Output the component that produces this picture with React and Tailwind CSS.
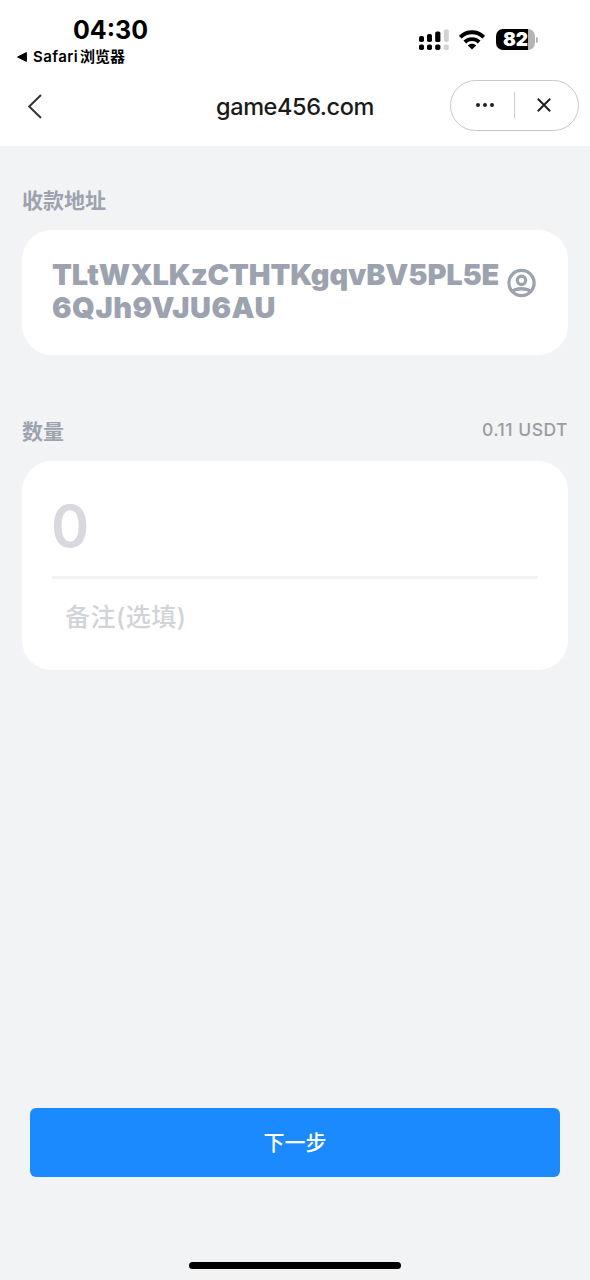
import React, { useState } from 'react';

function SignalIcon() {
  return (
    <svg width="30" height="21" viewBox="0 0 30 21">
      <g fill="#000">
        <rect x="0" y="7" width="5" height="6" rx="1.8" />
        <rect x="8" y="5" width="5" height="8" rx="1.8" />
        <rect x="16.2" y="2.5" width="5.2" height="10.5" rx="1.6" />
        <rect x="0" y="15.5" width="5" height="5.5" rx="1.8" />
        <rect x="8" y="15.5" width="5" height="5.5" rx="1.8" />
        <rect x="16.2" y="15.5" width="5.2" height="5.5" rx="1.8" />
      </g>
      <g fill="#d2d2d2">
        <rect x="24.8" y="0.3" width="5" height="12.7" rx="1.8" />
        <rect x="24.8" y="15.5" width="5" height="5.5" rx="1.8" />
      </g>
    </svg>
  );
}

function WifiIcon() {
  return (
    <svg width="26" height="20" viewBox="0 0 26 20">
      <g fill="none" stroke="#000" strokeWidth="3.9">
        <path d="M1.2 7.2 C8 0.6 18 0.6 24.8 7.2" />
        <path d="M5.8 12 C10 8.2 16 8.2 20.2 12" />
      </g>
      <path d="M13 19.4 L8.8 15.4 C11.3 13.2 14.7 13.2 17.2 15.4 Z" fill="#000" />
    </svg>
  );
}

function BatteryIcon({ level }) {
  return (
    <div className="flex items-center gap-[1px]">
      <div className="flex h-[21px] w-[39px] items-center justify-center rounded-[7px] bg-[linear-gradient(90deg,#000_82%,#b4b4b4_82%)]">
        <span className="text-[19px] leading-none font-black text-white">{level}</span>
      </div>
      <div className="h-[6px] w-[2px] rounded-r-full bg-[#b4b4b4]" />
    </div>
  );
}

function StatusBar() {
  return (
    <div className="flex h-[70px] justify-between">
      <div className="pt-[15px] pl-[17px] text-black">
        <div className="pl-[56px] text-[25px] leading-[30px] font-bold">04:30</div>
        <div className="mt-px flex h-[22px] items-center text-[15px] leading-[22px] font-semibold">
          <svg width="10" height="10" viewBox="0 0 10 10" className="mr-[6px]">
            <path d="M0.6 5 L9.4 0.6 V9.4 Z" fill="#000" stroke="#000" strokeLinejoin="round" />
          </svg>
          <span className="mr-[2px] tracking-[0.4px]">Safari</span>
          <span className="font-bold">浏览器</span>
        </div>
      </div>
      <div className="mt-[29px] mr-[52px] flex h-[21px] items-center">
        <SignalIcon />
        <div className="mr-[11px] ml-[10px]">
          <WifiIcon />
        </div>
        <BatteryIcon level={82} />
      </div>
    </div>
  );
}

function NavBar() {
  return (
    <div className="grid h-[76px] grid-cols-[1fr_auto_1fr] items-start pt-[10px]">
      <button className="mt-[13px] ml-[27px] w-[16px]">
        <svg width="16" height="27" viewBox="0 0 16 27">
          <path d="M14 2 L2.2 13.5 L14 25" fill="none" stroke="#333" strokeWidth="2" />
        </svg>
      </button>
      <h1 className="pt-[10px] text-[23.5px] leading-[34px] font-medium tracking-[-0.4px] text-[#1a1a1a]">game456.com</h1>
      <div className="mr-[11px] flex h-[51px] w-[129px] items-center justify-self-end rounded-full border border-[#c8c8c8] pb-[2px]">
        <button className="flex flex-1 justify-center pl-[5px]">
          <svg width="18" height="4" viewBox="0 0 18 4" fill="#222">
            <circle cx="2" cy="2" r="2" />
            <circle cx="9" cy="2" r="2" />
            <circle cx="16" cy="2" r="2" />
          </svg>
        </button>
        <div className="h-[26px] w-px bg-[#ccc]" />
        <button className="flex flex-1 justify-center pr-[5px]">
          <svg width="14" height="14" viewBox="0 0 14 14">
            <path d="M0.8 0.8 L13.2 13.2 M13.2 0.8 L0.8 13.2" stroke="#222" strokeWidth="2" />
          </svg>
        </button>
      </div>
    </div>
  );
}

function ContactIcon() {
  return (
    <svg width="30" height="30" viewBox="0 0 30 30" fill="none" stroke="#9ca3af" strokeWidth="3.3">
      <circle cx="14.5" cy="15" r="12.6" />
      <circle cx="14.5" cy="12.3" r="4.2" />
      <path d="M6 23 C9.5 20 19.5 20 23 23" />
    </svg>
  );
}

export default function App() {
  const [amount, setAmount] = useState('');
  const [note, setNote] = useState('');

  return (
    <div className="flex h-[1280px] w-full flex-col bg-[#f2f3f5] font-['Inter','Noto_Sans_CJK_SC',sans-serif]">
      <header className="bg-white">
        <StatusBar />
        <NavBar />
      </header>

      <main className="flex flex-1 flex-col px-[22px]">
        {/* Recipient address */}
        <h2 className="mt-[40px] text-[21px] leading-[30px] font-bold text-[#9ca3af]">收款地址</h2>
        <div className="mt-[14px] flex h-[125px] items-start rounded-[30px] bg-white pt-[28px] pr-[31px] pl-[30px]">
          <p className="w-[455px] text-[29px] leading-[33px] font-black break-all text-[#9ca3af]">
            <span className="tracking-[-0.17px]">TLtWXLKzCTHTKgqvBV5PL5E</span>
            <span className="tracking-[0.5px]">6QJh9VJU6AU</span>
          </p>
          <button className="mt-[10px] shrink-0">
            <ContactIcon />
          </button>
        </div>

        {/* Amount and note */}
        <div className="mt-[62px] flex h-[30px] items-center justify-between">
          <h2 className="text-[21px] leading-[30px] font-bold text-[#9ca3af]">数量</h2>
          <span className="pb-[3px] text-[17.5px] font-medium tracking-[0.5px] text-[#9b9ca1]">0.11 USDT</span>
        </div>
        <div className="mt-[14px] h-[209px] rounded-[30px] bg-white px-[30px] pt-[30px]">
          <input
            className="block h-[70px] w-full border-0 bg-transparent text-[58px] font-semibold outline-none -indent-px placeholder:text-[#d8d8de]"
            placeholder="0"
            value={amount}
            onChange={(e) => setAmount(e.target.value)}
          />
          <div className="mt-[15px] h-[3px] bg-[#f2f3f5]" />
          <input
            className="mt-[18px] block h-[40px] w-full border-0 bg-transparent px-[13px] text-[25px] font-medium tracking-[0.5px] outline-none placeholder:text-[#d1d3d9]"
            placeholder="备注(选填)"
            value={note}
            onChange={(e) => setNote(e.target.value)}
          />
        </div>

        <button className="mx-[8px] mt-auto h-[69px] rounded-[6px] bg-[#1b8aff] text-[21px] font-medium text-white">
          下一步
        </button>
      </main>

      <footer className="flex h-[103px] items-end justify-center pb-[11px]">
        <div className="h-[7px] w-[212px] rounded-full bg-black" />
      </footer>
    </div>
  );
}
